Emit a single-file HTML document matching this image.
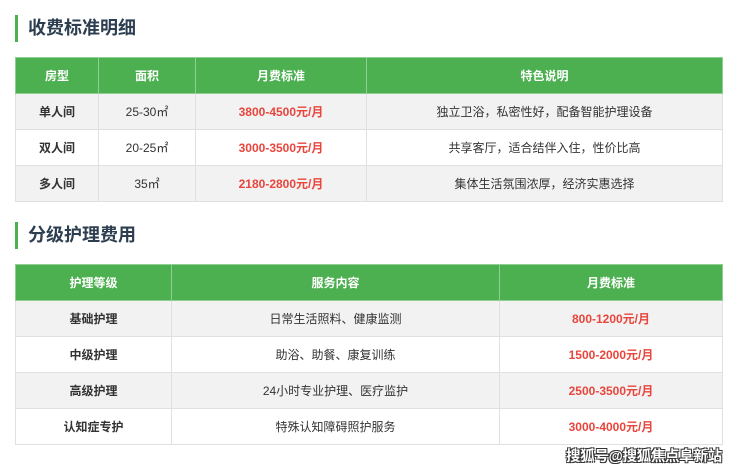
<!DOCTYPE html>
<html><head><meta charset="utf-8"><style>
body{margin:0;width:740px;height:470px;background:#fff;font-family:"Liberation Sans","Noto Sans CJK SC",sans-serif;position:relative;overflow:hidden}
h2{position:absolute;left:15px;margin:0;height:27px;border-left:3px solid #4caf50;padding-left:10px;font-size:18px;line-height:27px;color:#2c3e50;font-weight:bold}
table{position:absolute;left:15px;width:708px;border-collapse:collapse;font-size:12px;table-layout:fixed}
td,th{border:1px solid #e0e0e0;text-align:center;padding:0;height:35px;color:#333}
th{background:#4caf50;color:#fff;font-weight:bold;border-color:#8fcf91}
tr:nth-child(even) td{background:#f2f2f2}
td.b{font-weight:bold}
td.r{color:#e8453c;font-weight:bold}
.wm{position:absolute;left:566px;top:445px;font-size:14.5px;letter-spacing:-0.3px;font-weight:bold;color:#fff;text-shadow:-1px -1px 0 #333,1px -1px 0 #333,-1px 1px 0 #333,1px 1px 0 #333}
</style></head><body>
<h2 style="top:15px">收费标准明细</h2>
<table style="top:57px">
<colgroup><col style="width:83px"><col style="width:97px"><col style="width:171px"><col></colgroup>
<tr><th>房型</th><th>面积</th><th>月费标准</th><th>特色说明</th></tr>
<tr><td class="b">单人间</td><td>25-30㎡</td><td class="r">3800-4500元/月</td><td>独立卫浴，私密性好，配备智能护理设备</td></tr>
<tr><td class="b">双人间</td><td>20-25㎡</td><td class="r">3000-3500元/月</td><td>共享客厅，适合结伴入住，性价比高</td></tr>
<tr><td class="b">多人间</td><td>35㎡</td><td class="r">2180-2800元/月</td><td>集体生活氛围浓厚，经济实惠选择</td></tr>
</table>
<h2 style="top:222px">分级护理费用</h2>
<table style="top:264px">
<colgroup><col style="width:156px"><col style="width:328px"><col></colgroup>
<tr><th>护理等级</th><th>服务内容</th><th>月费标准</th></tr>
<tr><td class="b">基础护理</td><td>日常生活照料、健康监测</td><td class="r">800-1200元/月</td></tr>
<tr><td class="b">中级护理</td><td>助浴、助餐、康复训练</td><td class="r">1500-2000元/月</td></tr>
<tr><td class="b">高级护理</td><td>24小时专业护理、医疗监护</td><td class="r">2500-3500元/月</td></tr>
<tr><td class="b">认知症专护</td><td>特殊认知障碍照护服务</td><td class="r">3000-4000元/月</td></tr>
</table>
<div class="wm">搜狐号@搜狐焦点阜新站</div>
</body></html>
